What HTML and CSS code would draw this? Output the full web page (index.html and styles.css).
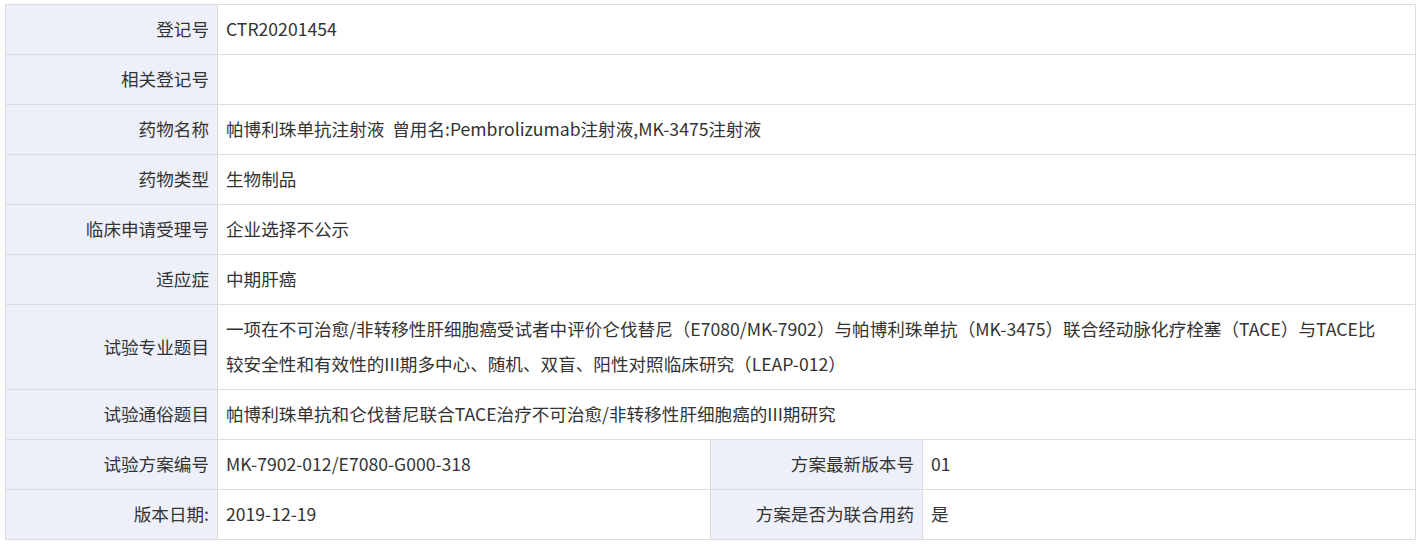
FILE: index.html
```html
<!DOCTYPE html>
<html lang="zh-CN">
<head>
<meta charset="utf-8">
<title>试验信息</title>
<link rel="stylesheet" href="styles.css">
</head>
<body>
<table class="info">
  <colgroup>
    <col class="c-label"><col class="c-value"><col class="c-label"><col class="c-value">
  </colgroup>
  <tr><th>登记号</th><td colspan="3">CTR20201454</td></tr>
  <tr><th>相关登记号</th><td colspan="3"></td></tr>
  <tr><th>药物名称</th><td colspan="3">帕博利珠单抗注射液&nbsp; 曾用名:Pembrolizumab注射液,MK-3475注射液</td></tr>
  <tr><th>药物类型</th><td colspan="3">生物制品</td></tr>
  <tr><th>临床申请受理号</th><td colspan="3">企业选择不公示</td></tr>
  <tr><th>适应症</th><td colspan="3">中期肝癌</td></tr>
  <tr><th>试验专业题目</th><td colspan="3" class="wide">一项在不可治愈/非转移性肝细胞癌受试者中评价仑伐替尼（E7080/MK-7902）与帕博利珠单抗（MK-3475）联合经动脉化疗栓塞（TACE）与TACE比较安全性和有效性的III期多中心、随机、双盲、阳性对照临床研究（LEAP-012）</td></tr>
  <tr><th>试验通俗题目</th><td colspan="3">帕博利珠单抗和仑伐替尼联合TACE治疗不可治愈/非转移性肝细胞癌的III期研究</td></tr>
  <tr><th>试验方案编号</th><td>MK-7902-012/E7080-G000-318</td><th>方案最新版本号</th><td>01</td></tr>
  <tr><th>版本日期:</th><td>2019-12-19</td><th>方案是否为联合用药</th><td>是</td></tr>
</table>
</body>
</html>
```

FILE: styles.css
```css
html, body {
  margin: 0;
  padding: 0;
  background: #fff;
}
body {
  padding: 4px 5px;
  font-family: "Microsoft YaHei", "Noto Sans CJK SC", "Noto Sans", sans-serif;
  font-size: 17.6px;
  color: #333;
}
.info {
  width: 1410px;
  border-collapse: collapse;
  table-layout: fixed;
}
.c-label { width: 212px; }
.c-value { width: 493px; }
.info th,
.info td {
  border: 1px solid #dcdcdc;
  padding: 6px 8px 8px;
  line-height: 35px;
  height: 35px;
  font-weight: normal;
  vertical-align: middle;
}
.info th {
  background: #eef0f9;
  text-align: right;
}
.info td {
  text-align: left;
  padding-left: 8px;
}
.info td.wide {
  padding-right: 24px;
}
```
